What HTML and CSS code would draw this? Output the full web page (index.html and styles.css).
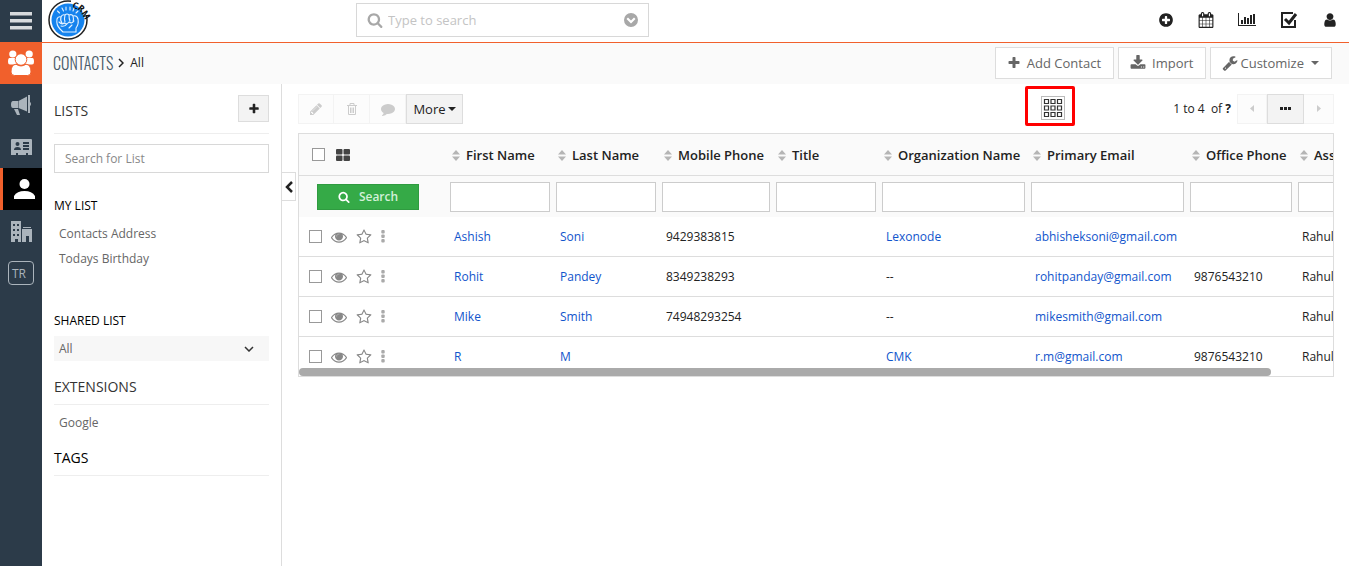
FILE: index.html
```html
<!DOCTYPE html>
<html lang="en">
<head>
<meta charset="utf-8">
<title>Contacts</title>
<link rel="stylesheet" href="styles.css">
</head>
<body>
<svg class="sprite" aria-hidden="true">
  <symbol id="search" viewBox="0 0 1792 1792"><path d="M1216 832q0-185-131.5-316.5t-316.5-131.5-316.5 131.5-131.5 316.5 131.5 316.5 316.5 131.5 316.5-131.5 131.5-316.5zm512 832q0 52-38 90t-90 38q-54 0-90-38l-343-342q-179 124-399 124-143 0-273.5-55.5t-225-150-150-225-55.5-273.5 55.5-273.5 150-225 225-150 273.5-55.5 273.5 55.5 225 150 150 225 55.5 273.5q0 220-124 399l343 343q37 37 37 90z"/></symbol>
  <symbol id="plus" viewBox="0 0 1792 1792"><path d="M1600 736v192q0 40-28 68t-68 28h-416v416q0 40-28 68t-68 28h-192q-40 0-68-28t-28-68v-416h-416q-40 0-68-28t-28-68v-192q0-40 28-68t68-28h416v-416q0-40 28-68t68-28h192q40 0 68 28t28 68v416h416q40 0 68 28t28 68z"/></symbol>
  <symbol id="plus-circle" viewBox="0 0 1792 1792"><path d="M1344 960v-128q0-26-19-45t-45-19h-256v-256q0-26-19-45t-45-19h-128q-26 0-45 19t-19 45v256h-256q-26 0-45 19t-19 45v128q0 26 19 45t45 19h256v256q0 26 19 45t45 19h128q26 0 45-19t19-45v-256h256q26 0 45-19t19-45zm320-64q0 209-103 385.5t-279.5 279.5-385.5 103-385.5-103-279.5-279.5-103-385.5 103-385.5 279.5-279.5 385.5-103 385.5 103 279.5 279.5 103 385.5z"/></symbol>
  <symbol id="calendar" viewBox="0 0 1792 1792"><path d="M192 1664h288v-288h-288v288zm352 0h320v-288h-320v288zm-352-352h288v-320h-288v320zm352 0h320v-320h-320v320zm-352-384h288v-288h-288v288zm736 736h320v-288h-320v288zm-384-736h320v-288h-320v288zm768 736h288v-288h-288v288zm-384-352h320v-320h-320v320zm-352-864v-288q0-13-9.5-22.5t-22.5-9.5h-64q-13 0-22.5 9.5t-9.5 22.5v288q0 13 9.5 22.5t22.5 9.5h64q13 0 22.5-9.5t9.5-22.5zm736 864h288v-320h-288v320zm-384-384h320v-288h-320v288zm384 0h288v-288h-288v288zm32-480v-288q0-13-9.5-22.5t-22.5-9.5h-64q-13 0-22.5 9.5t-9.5 22.5v288q0 13 9.5 22.5t22.5 9.5h64q13 0 22.5-9.5t9.5-22.5zm384-64v1280q0 52-38 90t-90 38h-1408q-52 0-90-38t-38-90v-1280q0-52 38-90t90-38h128v-96q0-66 47-113t113-47h64q66 0 113 47t47 113v96h384v-96q0-66 47-113t113-47h64q66 0 113 47t47 113v96h128q52 0 90 38t38 90z"/></symbol>
  <symbol id="chart" viewBox="0 0 18 16"><path d="M0 1h1v12h17v1H0zM3 8h2v4H3zM6 5h2v7H6zM9 6h2v6H9zM12 3h2v9h-2zM15 2h2v10h-2z"/></symbol>
  <symbol id="task" viewBox="0 0 18 18"><path d="M13 2H2v14h13V9" fill="none" stroke="currentColor" stroke-width="2"/><path d="M5 8l4 4 7-9" fill="none" stroke="currentColor" stroke-width="3"/></symbol>
  <symbol id="user" viewBox="0 0 1792 1792"><path d="M1536 1399q0 109-62.5 187t-150.5 78h-854q-88 0-150.5-78t-62.5-187q0-85 8.5-160.5t31.5-152 58.5-131 94-89 134.5-34.5q131 128 313 128t313-128q76 0 134.5 34.5t94 89 58.5 131 31.5 152 8.5 160.5zm-256-887q0 159-112.5 271.5t-271.5 112.5-271.5-112.5-112.5-271.5 112.5-271.5 271.5-112.5 271.5 112.5 112.5 271.5z"/></symbol>
  <symbol id="down-circle" viewBox="0 0 14 14"><path fill-rule="evenodd" d="M7 0a7 7 0 1 1 0 14A7 7 0 0 1 7 0zM2.500 6L7 10.500 11.500 6 10 4.500l-3 3-3-3z"/></symbol>
  <symbol id="download" viewBox="0 0 1792 1792"><path d="M1344 1344q0-26-19-45t-45-19-45 19-19 45 19 45 45 19 45-19 19-45zm256 0q0-26-19-45t-45-19-45 19-19 45 19 45 45 19 45-19 19-45zm128-224v320q0 40-28 68t-68 28h-1472q-40 0-68-28t-28-68v-320q0-40 28-68t68-28h465l135 136q58 56 136 56t136-56l136-136h464q40 0 68 28t28 68zm-325-569q17 41-14 70l-448 448q-18 19-45 19t-45-19l-448-448q-31-29-14-70 17-39 59-39h256v-448q0-26 19-45t45-19h256q26 0 45 19t19 45v448h256q42 0 59 39z"/></symbol>
  <symbol id="wrench" viewBox="0 0 1792 1792"><path d="M448 1472q0-26-19-45t-45-19-45 19-19 45 19 45 45 19 45-19 19-45zm644-420l-682 682q-37 37-90 37-52 0-91-37l-106-108q-38-36-38-90 0-53 38-91l681-681q39 98 114.500 173.500t173.500 114.500zm634-435q0 39-23 106-47 134-164.500 217.500t-258.500 83.500q-185 0-316.500-131.500t-131.500-316.500 131.500-316.500 316.500-131.500q58 0 121.500 16.500t107.500 46.500q16 11 16 28t-16 28l-293 169v224l193 107q5-3 79-48.500t135.500-81 70.500-35.500q15 0 23.500 10t8.500 25z"/></symbol>
  <symbol id="pencil" viewBox="0 0 1792 1792"><path d="M491 1536l91-91-235-235-91 91v107h128v128h107zm523-928q0-22-22-22-10 0-17 7l-542 542q-7 7-7 17 0 22 22 22 10 0 17-7l542-542q7-7 7-17zm-54-192l416 416-832 832h-416v-416zm683 96q0 53-37 90l-166 166-416-416 166-165q36-38 90-38 53 0 91 38l235 234q37 39 37 91z"/></symbol>
  <symbol id="trash" viewBox="0 0 12 14"><path fill="none" stroke="currentColor" d="M1 3.500h10M4 3V1.500h4V3M2.500 4v8.500h7V4M4.500 5.500V11M6 5.500V11M7.500 5.500V11"/></symbol>
  <symbol id="comment" viewBox="0 0 1792 1792"><path d="M1792 896q0 174-120 321.500t-326 233-450 85.500q-70 0-145-8-198 175-460 242-49 14-114 22-17 2-30.500-9t-17.500-29v-1q-3-4-.5-12t2-10 4.500-9.500l6-9 7-8.500 8-9q7-8 31-34.500t34.500-38 31-39.500 32.500-51 27-59 26-76q-157-89-247.500-220t-90.500-281q0-130 71-248.500t191-204.500 286-136.500 348-50.500q244 0 450 85.500t326 233 120 321.500z"/></symbol>
  <symbol id="eye" viewBox="0 0 1792 1792"><path d="M1664 960q-152-236-381-353 61 104 61 225 0 185-131.500 316.500t-316.500 131.500-316.500-131.500-131.500-316.500q0-121 61-225-229 117-381 353 133 205 333.500 326.500t434.500 121.500 434.500-121.500 333.500-326.500zm-720-384q0-20-14-34t-34-14q-125 0-214.500 89.500t-89.500 214.500q0 20 14 34t34 14 34-14 14-34q0-86 61-147t147-61q20 0 34-14t14-34zm848 384q0 34-20 69-140 230-376.500 368.500t-499.500 138.500-499.500-139-376.500-368q-20-35-20-69t20-69q140-229 376.500-368t499.500-139 499.500 139 376.500 368q20 35 20 69z"/><circle cx="896" cy="832" r="330" opacity=".7"/></symbol>
  <symbol id="star" viewBox="0 0 1792 1792"><path d="M1201 1004l306-297-422-62-189-382-189 382-422 62 306 297-73 421 378-199 377 199zm527-357q0 22-26 48l-363 354 86 500q1 7 1 20 0 50-41 50-19 0-40-12l-449-236-449 236q-22 12-40 12-21 0-31.500-14.500t-10.500-35.500q0-6 2-20l86-500-364-354q-25-27-25-48 0-37 56-46l502-73 225-455q19-41 49-41t49 41l225 455 502 73q56 9 56 46z"/></symbol>
  <symbol id="dots" viewBox="0 0 4 13"><rect x=".3" width="3.400" height="3.400" rx="1"/><rect x=".3" y="4.500" width="3.400" height="3.400" rx="1"/><rect x=".3" y="9" width="3.400" height="3.400" rx="1"/></symbol>
  <symbol id="tiles" viewBox="0 0 14 12"><rect width="6.500" height="5.500" rx="1"/><rect x="7.500" width="6.500" height="5.500" rx="1"/><rect y="6.500" width="6.500" height="5.500" rx="1"/><rect x="7.500" y="6.500" width="6.500" height="5.500" rx="1"/></symbol>
  <symbol id="sort" viewBox="0 0 8 11"><path d="M4 0l4 4.500H0zM0 6.500h8L4 11z"/></symbol>
  <symbol id="caret" viewBox="0 0 8 4"><path d="M0 0h8L4 4z"/></symbol>
</svg>

<div class="app">
  <nav class="rail" aria-label="Modules">
    <button class="rail-item" aria-label="Menu"><svg width="22" height="18" viewBox="0 0 22 18"><path fill="#d7dadd" d="M0 0h22v3.500H0zM0 7h22v3.500H0zM0 14h22v3.500H0z"/></svg></button>
    <a class="rail-item marketing" href="#" aria-label="Essentials"><svg width="26" height="26" viewBox="0 0 26 26" fill="#fff"><circle cx="4.800" cy="4" r="3.600"/><circle cx="21.200" cy="4" r="3.600"/><path d="M1.500 8h7v6.500H2q-2 0-2-2.500 0-4 1.500-4zM24.500 8h-7v6.500H24q2 0 2-2.500 0-4-1.500-4z"/><g stroke="#f1602c"><path d="M8 14.200q5 3.500 10 0 5 .5 5 7.800 0 3.500-3.500 3.500h-13Q3 25.500 3 22q0-7.300 5-7.800z"/><circle cx="13" cy="9.500" r="5.800"/></g></svg></a>
    <a class="rail-item" href="#" aria-label="Campaigns"><svg width="20" height="20" viewBox="0 0 20 20" fill="#abb4bc"><path d="M2 6h5v7H2q-2 0-2-3.500T2 6zM7.500 6L16 1.500v15L7.500 13zM17 0h2v7q1 .5 1 2t-1 2v7h-2zM3 14h4l2 6H6z"/></svg></a>
    <a class="rail-item" href="#" aria-label="Leads"><svg width="21" height="16" viewBox="0 0 21 16" fill="#abb4bc"><path fill-rule="evenodd" d="M1 0h19q1 0 1 1v15h-4v-2h-2v2H7v-2H5v2H0V1q0-1 1-1zM6.500 3a2 2 0 1 0 0 4 2 2 0 0 0 0-4zM3 11h7q0-3-3.500-3T3 11zM12 3v2h6V3zM12 6v2h6V6zM12 9v2h6V9z"/></svg></a>
    <a class="rail-item current" href="#" aria-label="Contacts"><svg width="21" height="20" viewBox="0 0 21 20" fill="#fff"><circle cx="10.500" cy="5" r="5"/><path d="M0 20v-3q3-5 10.500-5T21 17v3z"/></svg></a>
    <a class="rail-item" href="#" aria-label="Organizations"><svg width="21" height="21" viewBox="0 0 21 21" fill="#abb4bc"><path fill-rule="evenodd" d="M0 0h10v21H7v-3H4v3H0zM2 3v2h2V3zM6 3v2h2V3zM2 8v2h2V8zM6 8v2h2V8zM2 13v2h2v-2zM6 13v2h2v-2zM11 8h10v13h-3v-6h-3v6h-4zM12 6h8v1h-8z"/></svg></a>
    <a class="rail-item" href="#" aria-label="TR module"><span class="module-tag">TR</span></a>
  </nav>

  <div class="page">
    <header class="topbar">
      <a class="logo" href="#" aria-label="CRM home"><svg width="44" height="42" viewBox="0 0 44 42"><circle cx="20" cy="20" r="19" fill="none" stroke="#222" stroke-width="1.500"/><circle cx="20" cy="20" r="16.500" fill="#1583ee"/><path d="M23 0h21v15h-6Q33 5 23 3z" fill="#fff"/><g font-family="Open Sans, sans-serif" font-size="9" font-weight="700" fill="#111"><text transform="translate(24 8) rotate(14)">C</text><text transform="translate(29 9) rotate(38)">R</text><text transform="translate(33 13) rotate(58)">M</text></g><g fill="none" stroke="#e4f2ff" stroke-width="1.100" stroke-linecap="round" stroke-linejoin="round"><path d="M12 29q-4-4-3-10 1-3 4-2 1-3 4-2 2-2 4 0 3-1 4 1 4-1 5 3 1 5-2 9v4H15zM13 17q-1 4 1 6M17 15q-1 4 0 7M21 15q0 4 1 6M25 16q1 3 0 6M11 22q3 3 5 1 3 2 5-1 3 2 5-1M13 26q4 1 6-2M24 25l-3 3"/><path d="M9.500 11l2 2M14 8l1.500 3M18 7v3M22 7v3M26 8l-1 3M30 11l-2 2"/></g></svg></a>
      <label class="global-search"><svg class="icon i16"><use href="#search"/></svg><input type="text" placeholder="Type to search" aria-label="Type to search"><svg class="icon i14"><use href="#down-circle"/></svg></label>
      <div class="top-actions">
        <button aria-label="Quick create"><svg class="icon i16"><use href="#plus-circle"/></svg></button>
        <button aria-label="Calendar"><svg class="icon i16"><use href="#calendar"/></svg></button>
        <button aria-label="Reports"><svg class="icon i18"><use href="#chart"/></svg></button>
        <button aria-label="Tasks"><svg class="icon i18"><use href="#task"/></svg></button>
        <button aria-label="Profile"><svg class="icon i16"><use href="#user"/></svg></button>
      </div>
    </header>

    <div class="module-bar">
      <h1 class="module-name">CONTACTS</h1>
      <svg class="crumb-arrow" width="6" height="10" viewBox="0 0 6 10"><path d="M1 1l4 4-4 4" fill="none" stroke="#222" stroke-width="1.500"/></svg>
      <a class="crumb" href="#">All</a>
      <div class="module-actions">
        <button class="action"><svg class="icon i14"><use href="#plus"/></svg>Add Contact</button>
        <button class="action"><svg class="icon i16"><use href="#download"/></svg>Import</button>
        <button class="action customize"><svg class="icon i16"><use href="#wrench"/></svg>Customize<svg class="icon caret"><use href="#caret"/></svg></button>
      </div>
    </div>

    <div class="workspace">
      <aside class="sidebar">
        <div class="side-head"><h2 class="side-title">LISTS</h2><button class="add-list" aria-label="Add list"><svg class="icon i12"><use href="#plus"/></svg></button></div>
        <input class="list-search" type="text" placeholder="Search for List" aria-label="Search for List">
        <h3 class="group-title">MY LIST</h3>
        <ul class="links"><li><a href="#">Contacts Address</a></li><li><a href="#">Todays Birthday</a></li></ul>
        <h3 class="group-title shared">SHARED LIST</h3>
        <ul class="links"><li class="selected"><a href="#">All</a><svg width="10" height="6" viewBox="0 0 10 6"><path d="M1 1l4 4 4-4" fill="none" stroke="#333" stroke-width="1.500"/></svg></li></ul>
        <h2 class="side-title ruled">EXTENSIONS</h2>
        <ul class="links"><li><a href="#">Google</a></li></ul>
        <h2 class="side-title ruled tags">TAGS</h2>
        <button class="collapse" aria-label="Collapse sidebar"><svg width="8" height="12" viewBox="0 0 8 12"><path d="M7 1L2 6l5 5" fill="none" stroke="#222" stroke-width="2.500"/></svg></button>
      </aside>

      <main class="content">
        <div class="toolbar">
          <div class="group">
            <button class="tool" disabled aria-label="Edit"><svg class="icon i14"><use href="#pencil"/></svg></button>
            <button class="tool" disabled aria-label="Delete"><svg class="icon i14"><use href="#trash"/></svg></button>
            <button class="tool" disabled aria-label="Comment"><svg class="icon i14"><use href="#comment"/></svg></button>
            <button class="tool more">More<svg class="icon caret"><use href="#caret"/></svg></button>
          </div>
          <div class="highlight"><button class="grid-btn" aria-label="Choose columns"><svg width="20" height="20" viewBox="0 0 20 20" fill="none" stroke="#333" stroke-width="1.200"><path d="M1.500 1.500h4v4h-4zM8 1.500h4v4H8zM14.500 1.500h4v4h-4zM1.500 8h4v4h-4zM8 8h4v4H8zM14.500 8h4v4h-4zM1.500 14.500h4v4h-4zM8 14.500h4v4H8zM14.500 14.500h4v4h-4z"/></svg></button></div>
          <div class="pager">
            <span class="count">1 to 4&nbsp; of <b>?</b></span>
            <div class="group">
              <button class="tool page-btn" disabled aria-label="Previous"><svg width="4" height="7" viewBox="0 0 4 7"><path fill="currentColor" d="M4 0v7L0 3.500z"/></svg></button>
              <button class="tool" aria-label="Jump to page"><svg width="11" height="3" viewBox="0 0 11 3"><path fill="#222" d="M0 0h3v3H0zM4 0h3v3H4zM8 0h3v3H8z"/></svg></button>
              <button class="tool page-btn" disabled aria-label="Next"><svg width="4" height="7" viewBox="0 0 4 7"><path fill="currentColor" d="M0 0v7l4-3.500z"/></svg></button>
            </div>
          </div>
        </div>

        <div class="table-wrap">
          <table class="records">
            <colgroup><col class="c-tools"><col class="c-std"><col class="c-std"><col class="c-mobile"><col class="c-std"><col class="c-org"><col class="c-email"><col class="c-office"><col class="c-owner"></colgroup>
            <thead>
              <tr class="heads">
                <th><div class="head-tools"><input type="checkbox" aria-label="Select all"><svg class="icon tiles"><use href="#tiles"/></svg></div></th>
                <th><svg class="icon sort"><use href="#sort"/></svg>First Name</th>
                <th><svg class="icon sort"><use href="#sort"/></svg>Last Name</th>
                <th><svg class="icon sort"><use href="#sort"/></svg>Mobile Phone</th>
                <th><svg class="icon sort"><use href="#sort"/></svg>Title</th>
                <th><svg class="icon sort"><use href="#sort"/></svg>Organization Name</th>
                <th><svg class="icon sort"><use href="#sort"/></svg>Primary Email</th>
                <th><svg class="icon sort"><use href="#sort"/></svg>Office Phone</th>
                <th><svg class="icon sort"><use href="#sort"/></svg>Ass</th>
              </tr>
              <tr class="filters">
                <td><button class="search-btn"><svg class="icon i12"><use href="#search"/></svg>Search</button></td>
                <td><input type="text" aria-label="First Name"></td>
                <td><input type="text" aria-label="Last Name"></td>
                <td><input type="text" aria-label="Mobile Phone"></td>
                <td><input type="text" aria-label="Title"></td>
                <td><input type="text" aria-label="Organization Name"></td>
                <td><input type="text" aria-label="Primary Email"></td>
                <td><input type="text" aria-label="Office Phone"></td>
                <td><input type="text" aria-label="Assigned To"></td>
              </tr>
            </thead>
            <tbody>
              <tr><td><div class="row-tools"><input type="checkbox" aria-label="Select Ashish"><svg class="icon i16"><use href="#eye"/></svg><svg class="icon i16"><use href="#star"/></svg><svg class="icon dots"><use href="#dots"/></svg></div></td><td><a href="#">Ashish</a></td><td><a href="#">Soni</a></td><td>9429383815</td><td></td><td><a href="#">Lexonode</a></td><td><a href="#">abhisheksoni@gmail.com</a></td><td></td><td>Rahul</td></tr>
              <tr><td><div class="row-tools"><input type="checkbox" aria-label="Select Rohit"><svg class="icon i16"><use href="#eye"/></svg><svg class="icon i16"><use href="#star"/></svg><svg class="icon dots"><use href="#dots"/></svg></div></td><td><a href="#">Rohit</a></td><td><a href="#">Pandey</a></td><td>8349238293</td><td></td><td>--</td><td><a href="#">rohitpanday@gmail.com</a></td><td>9876543210</td><td>Rahul</td></tr>
              <tr><td><div class="row-tools"><input type="checkbox" aria-label="Select Mike"><svg class="icon i16"><use href="#eye"/></svg><svg class="icon i16"><use href="#star"/></svg><svg class="icon dots"><use href="#dots"/></svg></div></td><td><a href="#">Mike</a></td><td><a href="#">Smith</a></td><td>74948293254</td><td></td><td>--</td><td><a href="#">mikesmith@gmail.com</a></td><td></td><td>Rahul</td></tr>
              <tr><td><div class="row-tools"><input type="checkbox" aria-label="Select R"><svg class="icon i16"><use href="#eye"/></svg><svg class="icon i16"><use href="#star"/></svg><svg class="icon dots"><use href="#dots"/></svg></div></td><td><a href="#">R</a></td><td><a href="#">M</a></td><td></td><td></td><td><a href="#">CMK</a></td><td><a href="#">r.m@gmail.com</a></td><td>9876543210</td><td>Rahul</td></tr>
            </tbody>
          </table>
          <div class="scroll-thumb"></div>
        </div>
      </main>
    </div>
  </div>
</div>
</body>
</html>
```
FILE: styles.css
```css
* { box-sizing: border-box; }
body { margin: 0; font: 12px/20px "Open Sans", sans-serif; color: #222; background: #fff; }
h1, h2, h3, ul { margin: 0; padding: 0; font-weight: 400; list-style: none; }
a { color: inherit; text-decoration: none; }
button, input { font: inherit; color: inherit; border-radius: 0; }
button { display: flex; align-items: center; justify-content: center; padding: 0; border: 0; background: none; }
svg { flex: none; }

.sprite { position: absolute; width: 0; height: 0; }
.icon { fill: currentColor; }
.i12 { width: 12px; height: 12px; }
.i14 { width: 14px; height: 14px; }
.i16 { width: 16px; height: 16px; }
.i18 { width: 18px; height: 18px; }
.caret { width: 8px; height: 4px; }

.app { display: flex; min-height: 100vh; }
.page { flex: 1; min-width: 0; display: flex; flex-direction: column; }

.rail { width: 42px; flex: none; background: #2c3b49; }
.rail-item { display: flex; align-items: center; justify-content: center; width: 100%; height: 42px; }
.marketing { background: #f1602c; }
.current { background: #000; border-left: 3px solid #f1602c; padding-left: 3px; }
.module-tag { width: 26px; height: 24px; border: 1px solid #abb4bc; border-radius: 4px; color: #abb4bc; font-size: 12px; line-height: 23px; padding-left: 3px; }

.topbar { display: flex; align-items: center; height: 43px; border-bottom: 1px solid #f1602c; padding: 0 11px 2px 6px; }
.logo { display: flex; width: 44px; height: 40px; }
.global-search { display: flex; align-items: center; width: 293px; height: 34px; margin-left: 264px; padding: 0 10px; border: 1px solid #d8d8d8; color: #a8a8a8; }
.global-search input { flex: 1; min-width: 0; border: 0; outline: 0; padding: 0 5px; font-size: 13px; }
.global-search input::placeholder { color: #c4c4c4; }
.top-actions { display: flex; align-items: center; gap: 24px; margin-left: auto; }

.module-bar { display: flex; align-items: center; height: 41px; padding: 0 17px 2px 11px; background: #fafafa; }
.module-name { font: 300 16px/24px "Oswald", "Roboto Condensed", "Liberation Sans Narrow", "Roboto", sans-serif; color: #485b69; }
.crumb-arrow { margin: 0 6px 0 5px; }
.module-actions { display: flex; gap: 4px; margin-left: auto; }
.action { height: 32px; gap: 6px; padding: 0 12px 0 11px; border: 1px solid #ddd; background: #fff; color: #666; font-size: 13px; }
.customize { gap: 2px; }
.customize .caret { margin-left: 5px; }

.workspace { flex: 1; display: flex; }
.sidebar { position: relative; width: 240px; flex: none; padding: 0 12px; border-right: 1px solid #ddd; color: #666; }
.side-head { display: flex; align-items: center; justify-content: space-between; height: 50px; border-bottom: 1px solid #eee; }
.side-title { font-size: 14px; line-height: 20px; color: #333; padding-top: 4px; }
.add-list { width: 31px; height: 27px; border: 1px solid #ddd; background: #f3f3f3; color: #222; }
.list-search { display: block; width: 100%; height: 29px; margin-top: 10px; padding: 0 10px; border: 1px solid #d8d8d8; }
.list-search::placeholder { color: #888; }
.group-title { margin-top: 23px; font-size: 12px; color: #000; }
.links { padding-top: 5px; }
.links li { display: flex; align-items: center; justify-content: space-between; height: 25px; padding: 0 15px 0 5px; }
.shared { margin-top: 40px; }
.selected { background: #f7f7f7; }
.ruled { margin-top: 12px; padding: 4px 0 7px; border-bottom: 1px solid #eee; }
.tags { margin-top: 9px; color: #000; }
.collapse { position: absolute; left: 239px; top: 88px; width: 15px; height: 29px; border: 1px solid #ddd; background: #fff; }

.content { flex: 1; min-width: 0; padding: 0 15px 0 16px; }
.toolbar { display: flex; align-items: center; height: 49px; }
.group { display: flex; }
.tool { height: 30px; width: 37px; border: 1px solid #ddd; background: #f3f3f3; }
.tool:disabled { width: 36px; background: #fcfcfc; border-color: #f3f3f3; color: #ccc; }
.tool + .tool:disabled { border-left: 0; }
.more { width: 57px; gap: 2px; font-size: 13px; }
.highlight { display: flex; align-self: flex-start; align-items: center; justify-content: center; width: 50px; height: 40px; margin: 2px 0 0 auto; padding-left: 6px; padding-top: 4px; border: 3px solid #f00; border-radius: 2px; }
.grid-btn { width: 24px; height: 24px; border: 1px solid #bbb; background: #fff; }
.pager { display: flex; align-items: center; gap: 6px; margin-left: 98px; }
.page-btn:disabled { width: 30px; }

.table-wrap { position: relative; overflow: hidden; border: 1px solid #ddd; }
.records { width: 1104px; table-layout: fixed; border-collapse: separate; border-spacing: 0; }
.c-tools { width: 148px; }
.c-std { width: 106px; }
.c-mobile { width: 114px; }
.c-org { width: 149px; }
.c-email { width: 159px; }
.c-office { width: 108px; }
.records thead { background: #fafafa; }
.records th { height: 42px; padding: 0 0 0 5px; border-bottom: 1px solid #ddd; text-align: left; font-size: 13px; font-weight: 600; white-space: nowrap; }
.sort { width: 8px; height: 11px; margin-right: 6px; color: #b5b5b5; vertical-align: -1px; }
.filters td { height: 41px; padding: 0 3px; }
.filters input { display: block; width: 100%; height: 30px; border: 1px solid #ccc; background: #fff; }
.search-btn { width: 102px; height: 26px; margin-left: 15px; gap: 9px; background: #35aa47; color: #d3f0d8; border: 1px solid #2f9b40; font-weight: 600; }
.search-btn .icon { color: #fff; }
.records tbody td { height: 40px; padding: 0 0 0 7px; border-bottom: 1px solid #ddd; white-space: nowrap; }
.records tbody tr:last-child td { height: 39px; border-bottom: 0; }
.records a { color: #15c; }
.records input[type="checkbox"] { appearance: none; width: 13px; height: 13px; margin: 0; border: 1px solid #999; background: #fff; }
.head-tools { display: flex; align-items: center; gap: 11px; padding-left: 8px; }
.tiles { width: 14px; height: 12px; color: #444; }
.row-tools { display: flex; align-items: center; gap: 9px; padding-left: 3px; color: #888; }
.dots { width: 4px; height: 13px; color: #aaa; }
.scroll-thumb { position: absolute; left: 0; bottom: 0; width: 94%; height: 8px; border-radius: 4px; background: #aaa; }
```
